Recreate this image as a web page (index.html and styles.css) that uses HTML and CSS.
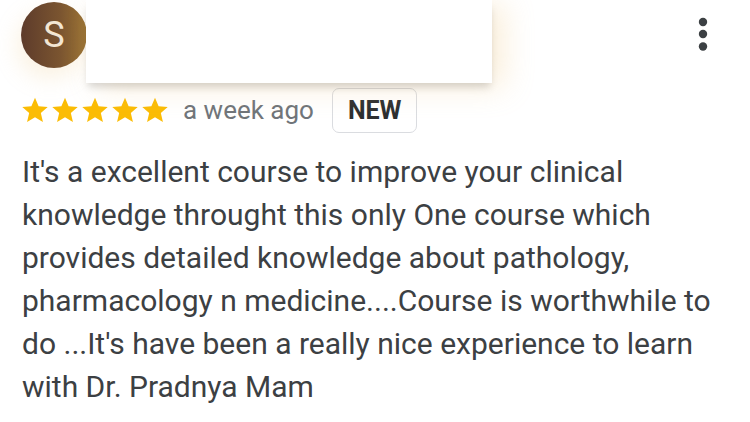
FILE: index.html
```html
<!DOCTYPE html>
<html>
<head>
<meta charset="utf-8">
<link rel="stylesheet" href="styles.css">
</head>
<body>
<div class="review">
  <div class="header">
    <div class="avatar">S</div>
    <div class="name-mask"></div>
    <div class="menu">
      <svg width="10" height="34" viewBox="0 0 10 34"><circle cx="5" cy="5" r="4.2" fill="#3c4043"/><circle cx="5" cy="17" r="4.2" fill="#3c4043"/><circle cx="5" cy="29.5" r="4.2" fill="#3c4043"/></svg>
    </div>
  </div>
  <div class="meta">
    <div class="stars">
      <svg class="star" viewBox="0 0 24 24"><path d="M12 1.5l3.1 7.2 7.8.7-5.9 5.2 1.8 7.7L12 18.2l-6.8 4.1 1.8-7.7L1.1 9.4l7.8-.7z"/></svg>
      <svg class="star" viewBox="0 0 24 24"><path d="M12 1.5l3.1 7.2 7.8.7-5.9 5.2 1.8 7.7L12 18.2l-6.8 4.1 1.8-7.7L1.1 9.4l7.8-.7z"/></svg>
      <svg class="star" viewBox="0 0 24 24"><path d="M12 1.5l3.1 7.2 7.8.7-5.9 5.2 1.8 7.7L12 18.2l-6.8 4.1 1.8-7.7L1.1 9.4l7.8-.7z"/></svg>
      <svg class="star" viewBox="0 0 24 24"><path d="M12 1.5l3.1 7.2 7.8.7-5.9 5.2 1.8 7.7L12 18.2l-6.8 4.1 1.8-7.7L1.1 9.4l7.8-.7z"/></svg>
      <svg class="star" viewBox="0 0 24 24"><path d="M12 1.5l3.1 7.2 7.8.7-5.9 5.2 1.8 7.7L12 18.2l-6.8 4.1 1.8-7.7L1.1 9.4l7.8-.7z"/></svg>
    </div>
    <span class="time">a week ago</span>
    <span class="badge">NEW</span>
  </div>
  <p class="text">It's a excellent course to improve your clinical knowledge throught this only One course which provides detailed knowledge about pathology, pharmacology n medicine....Course is worthwhile to do ...It's have been a really nice experience to learn with Dr. Pradnya Mam</p>
</div>
</body>
</html>
```
FILE: styles.css
```css
html, body {
  margin: 0;
  padding: 0;
  background: #ffffff;
}
body {
  width: 750px;
  height: 422px;
  overflow: hidden;
  font-family: Roboto, "Liberation Sans", sans-serif;
}
.review {
  position: relative;
}
.header {
  position: relative;
  height: 86px;
  display: flex;
  align-items: flex-start;
}
.avatar {
  margin-left: 21px;
  margin-top: 2px;
  width: 66px;
  height: 66px;
  border-radius: 50%;
  background: linear-gradient(90deg, #5d3b2b 0%, #7b5530 60%, #9c7434 100%);
  color: #f3e6d3;
  font-size: 36px;
  display: flex;
  align-items: center;
  justify-content: center;
  box-shadow: -4px 10px 22px rgba(240, 205, 140, 0.25);
}
.name-mask {
  position: absolute;
  left: 86px;
  top: 0;
  width: 406px;
  height: 83px;
  background: #ffffff;
  box-shadow: 0 6px 8px -2px rgba(0, 0, 0, 0.16), 12px 4px 30px rgba(240, 200, 130, 0.3);
}
.menu {
  margin-left: auto;
  margin-right: 42px;
  margin-top: 17px;
  width: 10px;
  height: 34px;
}
.meta {
  display: flex;
  align-items: center;
  height: 46px;
  margin-top: 1px;
  padding-left: 21px;
}
.stars {
  display: flex;
  gap: 2px;
}
.star {
  width: 28px;
  height: 28px;
  fill: #fbbc04;
}
.time {
  margin-left: 14px;
  font-size: 26px;
  color: #70757a;
}
.badge {
  margin-left: 18px;
  box-sizing: border-box;
  height: 45px;
  padding: 0 15px;
  border: 1.5px solid #dadce0;
  border-radius: 7px;
  display: flex;
  align-items: center;
  font-size: 25px;
  font-weight: 700;
  color: #2d2f31;
}
.text {
  margin: 17px 0 0 22px;
  width: 706px;
  font-size: 30px;
  line-height: 43px;
  color: #3c4043;
}
```
